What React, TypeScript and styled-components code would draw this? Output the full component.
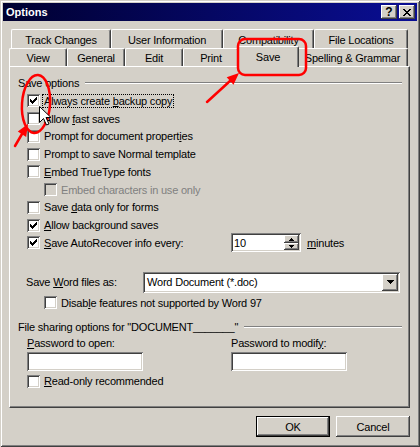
import React from "react";
import styled, { createGlobalStyle, css } from "styled-components";

const C = {
  face: "#d4d0c8",
  light: "#ffffff",
  shadow: "#808080",
  dark: "#404040",
  red: "#ff0000",
};

const GlobalStyle = createGlobalStyle`
  html, body { margin: 0; padding: 0; background: ${C.face}; }
  body {
    font-family: "Liberation Sans", Arial, sans-serif;
    font-size: 11px;
    letter-spacing: -0.2px;
    color: #000;
  }
  *, *::before, *::after { box-sizing: border-box; }
`;

const raised = css`
  background: ${C.face};
  box-shadow: inset -1px -1px ${C.dark}, inset 1px 1px ${C.light},
    inset -2px -2px ${C.shadow}, inset 2px 2px ${C.face};
`;

const sunken = css`
  background: #fff;
  box-shadow: inset 1px 1px ${C.shadow}, inset -1px -1px ${C.light},
    inset 2px 2px ${C.dark}, inset -2px -2px ${C.face};
`;

const Window = styled.div`
  position: relative;
  width: 420px;
  height: 447px;
  padding: 3px;
  display: flex;
  flex-direction: column;
  background: ${C.face};
  box-shadow: inset 1px 1px ${C.face}, inset -1px -1px ${C.dark},
    inset 2px 2px ${C.light}, inset -2px -2px ${C.shadow};
  overflow: hidden;
`;

const TitleBar = styled.div`
  flex: none;
  height: 18px;
  display: flex;
  align-items: center;
  padding: 0 2px 0 3px;
  background: linear-gradient(to right, #000030, #0a0e94);
`;

const Title = styled.span`
  flex: 1;
  color: #fff;
  font-weight: bold;
  letter-spacing: 0;
`;

const CaptionButtons = styled.div`
  display: flex;
  gap: 2px;
`;

const CaptionButton = styled.div`
  ${raised};
  width: 16px;
  height: 14px;
  display: flex;
  align-items: center;
  justify-content: center;
  font-weight: bold;
  font-size: 12px;
  letter-spacing: 0;
  line-height: 1;
`;

const Body = styled.div`
  flex: 1;
  display: flex;
  flex-direction: column;
  padding: 8px 7px 0 6px;
`;

const TabStrip = styled.div`
  display: flex;
  flex-direction: column;
`;

const TabRow = styled.div<{ $h: number; $inset: number }>`
  display: flex;
  align-items: flex-end;
  height: ${(p) => p.$h}px;
  padding-left: ${(p) => p.$inset}px;
`;

const Tab = styled.div<{ $w: number; $active?: boolean }>`
  flex: none;
  width: ${(p) => p.$w}px;
  height: 100%;
  display: flex;
  align-items: center;
  justify-content: center;
  padding-top: 1px;
  background: ${C.face};
  border-top: 1px solid ${C.light};
  border-left: 1px solid ${C.light};
  border-right: 1px solid ${C.dark};
  box-shadow: inset -1px 0 ${C.shadow};
  border-radius: 2px 2px 0 0;
  white-space: nowrap;
  ${(p) =>
    p.$active &&
    css`
      width: ${p.$w + 4}px;
      height: 21px;
      margin: 0 -2px -1px;
      padding-top: 0;
      padding-bottom: 1px;
      position: relative;
      z-index: 2;
    `}
`;

const Panel = styled.div`
  flex: none;
  height: 342px;
  display: flex;
  flex-direction: column;
  background: ${C.face};
  border-top: 1px solid ${C.light};
  border-left: 1px solid ${C.light};
  border-right: 1px solid ${C.dark};
  border-bottom: 1px solid ${C.dark};
  box-shadow: inset -1px -1px ${C.shadow};
`;

const GroupHeader = styled.div<{ $mt: number }>`
  display: flex;
  align-items: center;
  height: 14px;
  margin-top: ${(p) => p.$mt}px;
  padding: 0 7px 0 8px;
  white-space: nowrap;
`;

const GroupLine = styled.div`
  flex: 1;
  height: 2px;
  margin-left: 6px;
  border-top: 1px solid ${C.shadow};
  border-bottom: 1px solid ${C.light};
`;

const CheckList = styled.div`
  display: flex;
  flex-direction: column;
  margin-top: 2px;
`;

const CheckRow = styled.div<{ $indent: number; $mt?: number }>`
  display: flex;
  align-items: center;
  height: 17.75px;
  padding-left: ${(p) => p.$indent}px;
  margin-top: ${(p) => p.$mt ?? 0}px;
`;

const CheckItem = styled.label<{ $w?: number }>`
  display: flex;
  align-items: center;
  flex: none;
  width: ${(p) => (p.$w ? `${p.$w}px` : "auto")};
`;

const Box = styled.span<{ $disabled?: boolean }>`
  ${sunken};
  background: ${(p) => (p.$disabled ? C.face : "#fff")};
  flex: none;
  width: 13px;
  height: 13px;
  display: flex;
  align-items: center;
  justify-content: center;
`;

const CheckLabel = styled.span<{ $focus?: boolean; $disabled?: boolean }>`
  margin-left: 2px;
  padding: 0 1px;
  border: 1px ${(p) => (p.$focus ? "dotted #000" : "solid transparent")};
  line-height: 12px;
  color: ${(p) => (p.$disabled ? C.shadow : "#000")};
  white-space: nowrap;
`;

const U = styled.span`
  text-decoration: underline;
`;

const SpinBox = styled.div`
  ${sunken};
  flex: none;
  width: 70px;
  height: 19px;
  display: flex;
  align-items: center;
  padding: 2px;
`;

const SpinValue = styled.span`
  flex: 1;
  padding-left: 1px;
`;

const SpinButtons = styled.div`
  display: flex;
  flex-direction: column;
  width: 15px;
  height: 15px;
`;

const SpinButton = styled.div`
  ${raised};
  flex: 1;
  display: flex;
  align-items: center;
  justify-content: center;
`;

const Suffix = styled.span`
  margin-left: 6px;
`;

const FieldRow = styled.div`
  display: flex;
  align-items: center;
  height: 21px;
  margin-top: 20px;
  padding-left: 16px;
`;

const FieldLabel = styled.span<{ $w: number }>`
  flex: none;
  width: ${(p) => p.$w}px;
`;

const Select = styled.div`
  ${sunken};
  flex: none;
  width: 257px;
  height: 21px;
  display: flex;
  align-items: center;
  padding: 2px;
`;

const SelectValue = styled.span`
  flex: 1;
  padding-left: 2px;
`;

const SelectButton = styled.div`
  ${raised};
  width: 16px;
  height: 17px;
  display: flex;
  align-items: center;
  justify-content: center;
`;

const PasswordGrid = styled.div`
  display: grid;
  grid-template-columns: 204px 116px;
  row-gap: 2px;
  padding-left: 17px;
  margin-top: 2px;
`;

const FieldCaption = styled.span`
  height: 14px;
  line-height: 14px;
  white-space: nowrap;
`;

const TextInput = styled.div`
  ${sunken};
  width: 116px;
  height: 19px;
`;

const ButtonRow = styled.div`
  display: flex;
  justify-content: flex-end;
  gap: 6px;
  margin-top: 8px;
`;

const Button = styled.button<{ $default?: boolean }>`
  ${raised};
  width: 74px;
  height: 21px;
  border: 0;
  padding: 0;
  font: inherit;
  letter-spacing: inherit;
  color: #000;
  ${(p) =>
    p.$default &&
    css`
      box-shadow: inset 0 0 0 1px #000, inset -2px -2px ${C.dark},
        inset 2px 2px ${C.light}, inset -3px -3px ${C.shadow};
    `}
`;

const Overlay = styled.svg`
  position: absolute;
  left: 0;
  top: 0;
  width: 420px;
  height: 447px;
  pointer-events: none;
  z-index: 10;
`;

const checkPixels: [number, number][] = [
  [6, 0], [5, 1], [6, 1], [0, 2], [4, 2], [5, 2], [6, 2],
  [0, 3], [1, 3], [3, 3], [4, 3], [5, 3],
  [0, 4], [1, 4], [2, 4], [3, 4], [4, 4],
  [1, 5], [2, 5], [3, 5], [2, 6],
];

const closePixels: [number, number][] = [];
[
  "##....##",
  ".##..##.",
  "..####..",
  "...##...",
  "..####..",
  ".##..##.",
  "##....##",
].forEach((row, y) =>
  row.split("").forEach((c, x) => {
    if (c === "#") closePixels.push([x, y]);
  })
);

function PixelGlyph({ pixels, w, h }: { pixels: [number, number][]; w: number; h: number }) {
  return (
    <svg width={w} height={h} viewBox={`0 0 ${w} ${h}`} shapeRendering="crispEdges">
      {pixels.map(([x, y]) => (
        <rect key={`${x}-${y}`} x={x} y={y} width={1} height={1} fill="#000" />
      ))}
    </svg>
  );
}

function Triangle({ dir, w, h }: { dir: "up" | "down"; w: number; h: number }) {
  const pts = dir === "up" ? `0,${h} ${w},${h} ${w / 2},0` : `0,0 ${w},0 ${w / 2},${h}`;
  return (
    <svg width={w} height={h} viewBox={`0 0 ${w} ${h}`} shapeRendering="crispEdges">
      <polygon points={pts} fill="#000" />
    </svg>
  );
}

function Check({
  checked,
  disabled,
  focus,
  width,
  children,
}: {
  checked?: boolean;
  disabled?: boolean;
  focus?: boolean;
  width?: number;
  children: React.ReactNode;
}) {
  return (
    <CheckItem $w={width}>
      <Box $disabled={disabled}>{checked && <PixelGlyph pixels={checkPixels} w={7} h={7} />}</Box>
      <CheckLabel $focus={focus} $disabled={disabled}>
        {children}
      </CheckLabel>
    </CheckItem>
  );
}

const backTabs = [
  { label: "Track Changes", w: 100 },
  { label: "User Information", w: 112 },
  { label: "Compatibility", w: 91 },
  { label: "File Locations", w: 94 },
];

const frontTabs = [
  { label: "View", w: 58 },
  { label: "General", w: 58 },
  { label: "Edit", w: 58 },
  { label: "Print", w: 56 },
  { label: "Save", w: 58, active: true },
  { label: "Spelling & Grammar", w: 111 },
];

export default function App() {
  return (
    <>
      <GlobalStyle />
      <Window>
        <TitleBar>
          <Title>Options</Title>
          <CaptionButtons>
            <CaptionButton>?</CaptionButton>
            <CaptionButton>
              <PixelGlyph pixels={closePixels} w={8} h={7} />
            </CaptionButton>
          </CaptionButtons>
        </TitleBar>

        <Body>
          <TabStrip>
            <TabRow $h={19} $inset={2}>
              {backTabs.map((t) => (
                <Tab key={t.label} $w={t.w}>
                  {t.label}
                </Tab>
              ))}
            </TabRow>
            <TabRow $h={18} $inset={0}>
              {frontTabs.map((t) => (
                <Tab key={t.label} $w={t.w} $active={t.active}>
                  {t.label}
                </Tab>
              ))}
            </TabRow>
          </TabStrip>

          <Panel>
            <GroupHeader $mt={9}>
              Save options
              <GroupLine />
            </GroupHeader>

            <CheckList>
              <CheckRow $indent={17}>
                <Check checked focus>
                  Always create <U>b</U>ackup copy
                </Check>
              </CheckRow>
              <CheckRow $indent={17}>
                <Check>
                  Allow <U>f</U>ast saves
                </Check>
              </CheckRow>
              <CheckRow $indent={17}>
                <Check>
                  Prompt for document propert<U>i</U>es
                </Check>
              </CheckRow>
              <CheckRow $indent={17}>
                <Check>Prompt to save Normal template</Check>
              </CheckRow>
              <CheckRow $indent={17}>
                <Check>
                  <U>E</U>mbed TrueType fonts
                </Check>
              </CheckRow>
              <CheckRow $indent={34}>
                <Check disabled>Embed characters in use only</Check>
              </CheckRow>
              <CheckRow $indent={17}>
                <Check>
                  Save <U>d</U>ata only for forms
                </Check>
              </CheckRow>
              <CheckRow $indent={17}>
                <Check checked>
                  <U>A</U>llow background saves
                </Check>
              </CheckRow>
              <CheckRow $indent={17}>
                <Check checked width={204}>
                  <U>S</U>ave AutoRecover info every:
                </Check>
                <SpinBox>
                  <SpinValue>10</SpinValue>
                  <SpinButtons>
                    <SpinButton>
                      <Triangle dir="up" w={5} h={3} />
                    </SpinButton>
                    <SpinButton>
                      <Triangle dir="down" w={5} h={3} />
                    </SpinButton>
                  </SpinButtons>
                </SpinBox>
                <Suffix>
                  <U>m</U>inutes
                </Suffix>
              </CheckRow>
            </CheckList>

            <FieldRow>
              <FieldLabel $w={117}>
                Save <U>W</U>ord files as:
              </FieldLabel>
              <Select>
                <SelectValue>Word Document (*.doc)</SelectValue>
                <SelectButton>
                  <Triangle dir="down" w={7} h={4} />
                </SelectButton>
              </Select>
            </FieldRow>
            <CheckRow $indent={34} $mt={1}>
              <Check>
                Disab<U>l</U>e features not supported by Word 97
              </Check>
            </CheckRow>

            <GroupHeader $mt={8}>
              File sharing options for "DOCUMENT_______"
              <GroupLine />
            </GroupHeader>

            <PasswordGrid>
              <FieldCaption>
                <U>P</U>assword to open:
              </FieldCaption>
              <FieldCaption>
                Password to modif<U>y</U>:
              </FieldCaption>
              <TextInput />
              <TextInput />
            </PasswordGrid>
            <CheckRow $indent={17} $mt={2}>
              <Check>
                <U>R</U>ead-only recommended
              </Check>
            </CheckRow>
          </Panel>

          <ButtonRow>
            <Button $default>OK</Button>
            <Button>Cancel</Button>
          </ButtonRow>
        </Body>

        <Overlay viewBox="0 0 420 447">
          <ellipse
            cx={36}
            cy={104}
            rx={14}
            ry={29}
            transform="rotate(4 36 104)"
            fill="none"
            stroke={C.red}
            strokeWidth={2.5}
          />
          <rect x={238} y={39} width={68} height={36} rx={7} fill="none" stroke={C.red} strokeWidth={2.5} />
          <line x1={207} y1={102} x2={230} y2={81} stroke={C.red} strokeWidth={2.5} strokeLinecap="round" />
          <polygon points="239,73 233.5,84.8 226.7,77.3" fill={C.red} />
          <line x1={15} y1={146} x2={22} y2={134} stroke={C.red} strokeWidth={2.5} strokeLinecap="round" />
          <polygon points="28,124 26.2,136.9 17.8,131.5" fill={C.red} />
          <path
            d="M0 0 L0 16 L4 12 L7 18.5 L9.5 17.5 L6.5 11 L11.5 11 Z"
            transform="translate(39.5 106.5)"
            fill="#fff"
            stroke="#000"
            strokeWidth={1}
          />
        </Overlay>
      </Window>
    </>
  );
}
